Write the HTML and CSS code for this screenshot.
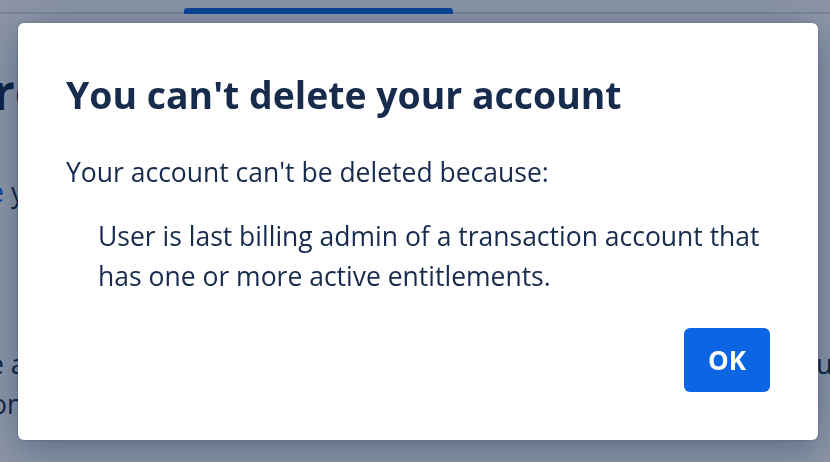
FILE: index.html
```html
<!DOCTYPE html>
<html lang="en">
<head>
<meta charset="utf-8">
<title>Delete account</title>
<link rel="stylesheet" href="styles.css">
</head>
<body>
<div class="page">
  <header class="topnav">
    <span class="tab-indicator"></span>
  </header>
  <main class="content">
    <h1 class="page-title">Account preferences</h1>
    <p class="bg-line bg-line-1"><a href="#" class="bg-link">Delete</a> your account</p>
    <div class="bg-row">
      <p class="bg-line bg-line-2">Make sure a new admin is assigned to your site before you</p>
      <p class="bg-line bg-line-right">use this</p>
    </div>
    <p class="bg-line bg-line-3">on your products.</p>
  </main>
</div>

<div class="blanket">
  <section class="modal" role="dialog" aria-labelledby="modal-title">
    <h2 class="modal-title" id="modal-title">You can't delete your account</h2>
    <div class="modal-body">
      <p class="modal-text">Your account can't be deleted because:</p>
      <ul class="reasons">
        <li class="reason">User is last billing admin of a transaction account that has one or more active entitlements.</li>
      </ul>
    </div>
    <footer class="modal-footer">
      <button class="btn-primary" type="button">OK</button>
    </footer>
  </section>
</div>
</body>
</html>
```
FILE: styles.css
```css
html, body {
  margin: 0;
  padding: 0;
  background: #ffffff;
  overflow: hidden;
}

body {
  font-family: "Open Sans", "Noto Sans", sans-serif;
  color: #172b4d;
  width: 830px;
  height: 462px;
}

/* ---------- background page ---------- */
.page {
  width: 830px;
  height: 462px;
}

.topnav {
  height: 12px;
  border-bottom: 2px solid #dfe1e6;
  display: flex;
  align-items: flex-end;
}

.tab-indicator {
  display: block;
  width: 269px;
  height: 6px;
  margin-left: 184px;
  margin-bottom: -2px;
  background: #0c66e4;
  border-radius: 3px 3px 0 0;
}

.content {
  display: flex;
  flex-direction: column;
}

.page-title {
  margin: 50px 0 0 -246px;
  font-size: 48px;
  line-height: 56px;
  font-weight: 700;
  white-space: nowrap;
  color: #172b4d;
}

.bg-line {
  margin: 0;
  font-size: 26.5px;
  line-height: 40px;
  white-space: nowrap;
  color: #172b4d;
}

.bg-link {
  color: #0c66e4;
  text-decoration: none;
}

.bg-line-1 {
  margin-top: 52px;
  margin-left: -76px;
}

.bg-row {
  display: flex;
  justify-content: space-between;
  margin-top: 132px;
}

.bg-line-2 {
  margin-left: -125px;
}

.bg-line-right {
  margin-right: -82px;
}

.bg-line-3 {
  margin-left: -9px;
}

/* ---------- modal ---------- */
.blanket {
  position: fixed;
  inset: 0;
  background: rgba(9, 30, 66, 0.47);
  padding: 23px 0 0 18px;
}

.modal {
  width: 800px;
  box-sizing: border-box;
  padding: 48px;
  background: #ffffff;
  border-radius: 6px;
  display: flex;
  flex-direction: column;
  box-shadow: 0 0 40px -8px rgba(9, 30, 66, 0.35), 0 16px 24px rgba(9, 30, 66, 0.15), 0 0 2px rgba(9, 30, 66, 0.31);
}

.modal-title {
  margin: 0;
  font-size: 37.4px;
  line-height: 48px;
  font-weight: 700;
  color: #172b4d;
}

.modal-body {
  margin-top: 33px;
  font-size: 26.5px;
  line-height: 40px;
}

.modal-text {
  margin: 0;
}

.reasons {
  margin: 24px 0 0;
  padding: 0 0 0 32px;
  list-style: none;
}

.reason {
  margin: 0;
}

.modal-footer {
  margin-top: 32px;
  display: flex;
  justify-content: flex-end;
}

.btn-primary {
  height: 64px;
  padding: 0 24px;
  border: 0;
  border-radius: 6px;
  background: #0c66e4;
  color: #ffffff;
  font-family: "Open Sans", "Noto Sans", sans-serif;
  font-size: 26px;
  font-weight: 700;
  line-height: 64px;
  cursor: pointer;
}
```
